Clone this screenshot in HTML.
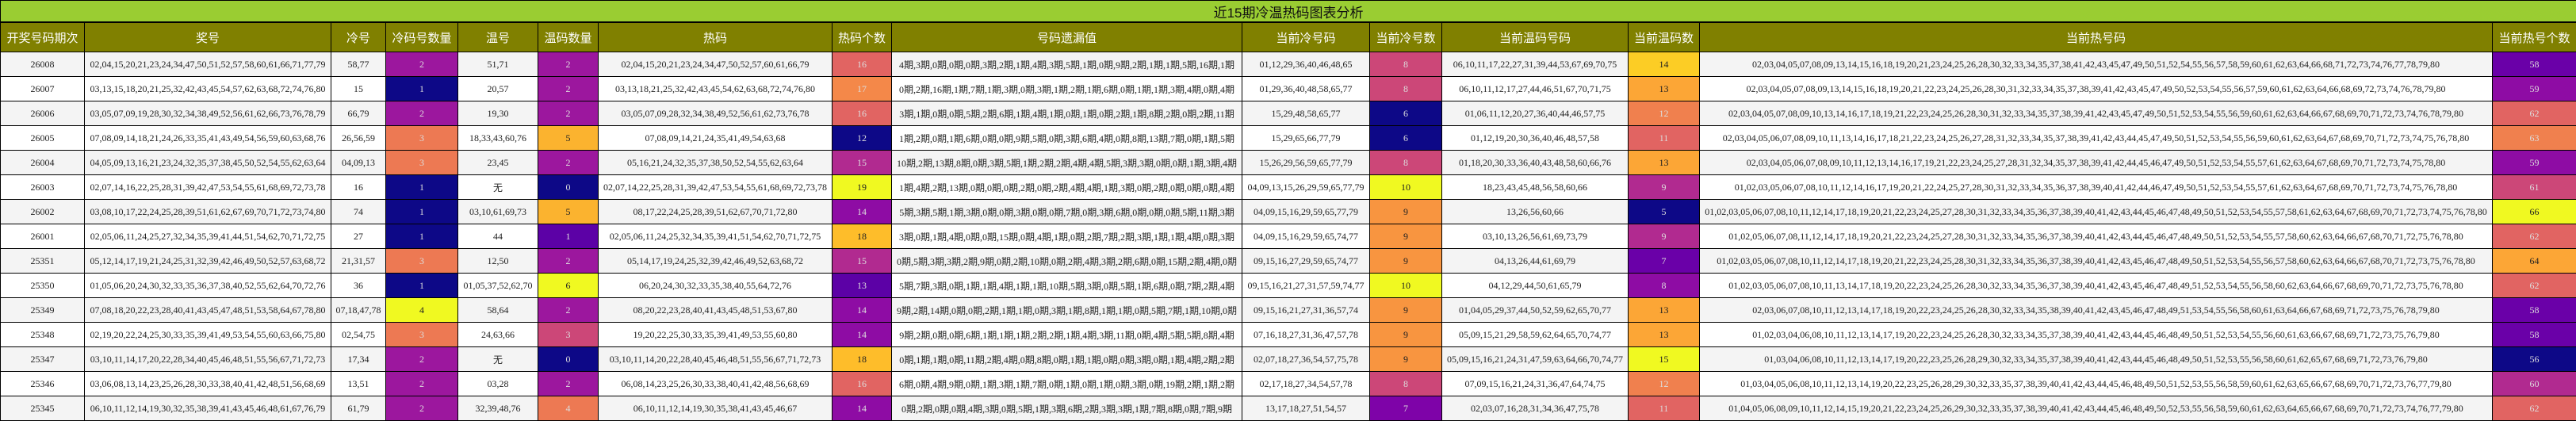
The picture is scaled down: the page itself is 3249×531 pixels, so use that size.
<!DOCTYPE html>
<html><head><meta charset="utf-8"><style>
html,body{margin:0;padding:0;background:#fff;width:3249px;height:531px;overflow:hidden}
table{border-collapse:collapse;table-layout:fixed;width:3249px;font-family:"Liberation Serif","Noto Sans CJK SC",serif;font-size:12px;color:#222}
td,th{border:1px solid #000;text-align:center;padding:0;white-space:nowrap;overflow:hidden}
.tt td{background:#9acd32;height:26px;font-family:"Liberation Sans","Noto Sans CJK SC",sans-serif;font-size:17px;color:#111;border-bottom:2px solid #000}
.hd th{background:#808000;color:#fff;height:36px;font-weight:normal;font-family:"Liberation Sans","Noto Sans CJK SC",sans-serif;font-size:15px}
tr.r td{height:30px}
tr.r:nth-child(odd) td{background:#f4f4f4}
tr.r:nth-child(even) td{background:#fff}
tr.r td.a{background:#0d0887;color:#ddd}
tr.r td.b{background:#5c01a6;color:#ddd}
tr.r td.c{background:#6a00a8;color:#ddd}
tr.r td.c2{background:#7e03a8;color:#ddd}
tr.r td.d{background:#9c179e;color:#ddd}
tr.r td.e{background:#8e0ca4;color:#ddd}
tr.r td.f{background:#b12a90;color:#ddd}
tr.r td.g{background:#cc4778;color:#ddd}
tr.r td.h{background:#e16462;color:#ddd}
tr.r td.i{background:#ed7953;color:#ddd}
tr.r td.j{background:#f48849;color:#ddd}
tr.r td.j2{background:#f0804e;color:#ddd}
tr.r td.k{background:#f89540;color:#222}
tr.r td.l{background:#fca636;color:#222}
tr.r td.m{background:#fbb32f;color:#222}
tr.r td.n{background:#febd2a;color:#222}
tr.r td.o{background:#fccd25;color:#222}
tr.r td.y{background:#f0f921;color:#222}
</style></head><body>
<table>
<colgroup><col style="width:106px"><col style="width:311px"><col style="width:69px"><col style="width:91px"><col style="width:101px"><col style="width:76px"><col style="width:295px"><col style="width:75px"><col style="width:442px"><col style="width:161px"><col style="width:91px"><col style="width:235px"><col style="width:90px"><col style="width:1000px"><col style="width:106px"></colgroup>
<tr class="tt"><td colspan="15">近15期冷温热码图表分析</td></tr>
<tr class="hd"><th>开奖号码期次</th><th>奖号</th><th>冷号</th><th>冷码号数量</th><th>温号</th><th>温码数量</th><th>热码</th><th>热码个数</th><th>号码遗漏值</th><th>当前冷号码</th><th>当前冷号数</th><th>当前温码号码</th><th>当前温码数</th><th>当前热号码</th><th>当前热号个数</th></tr>
<tr class="r"><td>26008</td><td>02,04,15,20,21,23,24,34,47,50,51,52,57,58,60,61,66,71,77,79</td><td>58,77</td><td class="d">2</td><td>51,71</td><td class="d">2</td><td>02,04,15,20,21,23,24,34,47,50,52,57,60,61,66,79</td><td class="h">16</td><td>4期,3期,0期,0期,0期,3期,2期,1期,4期,3期,5期,1期,0期,9期,2期,1期,1期,5期,16期,1期</td><td>01,12,29,36,40,46,48,65</td><td class="g">8</td><td>06,10,11,17,22,27,31,39,44,53,67,69,70,75</td><td class="o">14</td><td>02,03,04,05,07,08,09,13,14,15,16,18,19,20,21,23,24,25,26,28,30,32,33,34,35,37,38,41,42,43,45,47,49,50,51,52,54,55,56,57,58,59,60,61,62,63,64,66,68,71,72,73,74,76,77,78,79,80</td><td class="c">58</td></tr>
<tr class="r"><td>26007</td><td>03,13,15,18,20,21,25,32,42,43,45,54,57,62,63,68,72,74,76,80</td><td>15</td><td class="a">1</td><td>20,57</td><td class="d">2</td><td>03,13,18,21,25,32,42,43,45,54,62,63,68,72,74,76,80</td><td class="j">17</td><td>0期,2期,16期,1期,7期,1期,3期,0期,3期,1期,2期,1期,6期,0期,1期,1期,3期,4期,0期,4期</td><td>01,29,36,40,48,58,65,77</td><td class="g">8</td><td>06,10,11,12,17,27,44,46,51,67,70,71,75</td><td class="l">13</td><td>02,03,04,05,07,08,09,13,14,15,16,18,19,20,21,22,23,24,25,26,28,30,31,32,33,34,35,37,38,39,41,42,43,45,47,49,50,52,53,54,55,56,57,59,60,61,62,63,64,66,68,69,72,73,74,76,78,79,80</td><td class="e">59</td></tr>
<tr class="r"><td>26006</td><td>03,05,07,09,19,28,30,32,34,38,49,52,56,61,62,66,73,76,78,79</td><td>66,79</td><td class="d">2</td><td>19,30</td><td class="d">2</td><td>03,05,07,09,28,32,34,38,49,52,56,61,62,73,76,78</td><td class="h">16</td><td>3期,1期,0期,0期,5期,2期,6期,1期,4期,1期,0期,1期,0期,2期,1期,8期,2期,0期,2期,11期</td><td>15,29,48,58,65,77</td><td class="a">6</td><td>01,06,11,12,20,27,36,40,44,46,57,75</td><td class="j2">12</td><td>02,03,04,05,07,08,09,10,13,14,16,17,18,19,21,22,23,24,25,26,28,30,31,32,33,34,35,37,38,39,41,42,43,45,47,49,50,51,52,53,54,55,56,59,60,61,62,63,64,66,67,68,69,70,71,72,73,74,76,78,79,80</td><td class="h">62</td></tr>
<tr class="r"><td>26005</td><td>07,08,09,14,18,21,24,26,33,35,41,43,49,54,56,59,60,63,68,76</td><td>26,56,59</td><td class="i">3</td><td>18,33,43,60,76</td><td class="m">5</td><td>07,08,09,14,21,24,35,41,49,54,63,68</td><td class="a">12</td><td>1期,2期,0期,1期,6期,0期,0期,9期,5期,0期,3期,6期,4期,0期,8期,13期,7期,0期,1期,5期</td><td>15,29,65,66,77,79</td><td class="a">6</td><td>01,12,19,20,30,36,40,46,48,57,58</td><td class="h">11</td><td>02,03,04,05,06,07,08,09,10,11,13,14,16,17,18,21,22,23,24,25,26,27,28,31,32,33,34,35,37,38,39,41,42,43,44,45,47,49,50,51,52,53,54,55,56,59,60,61,62,63,64,67,68,69,70,71,72,73,74,75,76,78,80</td><td class="j2">63</td></tr>
<tr class="r"><td>26004</td><td>04,05,09,13,16,21,23,24,32,35,37,38,45,50,52,54,55,62,63,64</td><td>04,09,13</td><td class="i">3</td><td>23,45</td><td class="d">2</td><td>05,16,21,24,32,35,37,38,50,52,54,55,62,63,64</td><td class="f">15</td><td>10期,2期,13期,8期,0期,3期,5期,1期,2期,2期,4期,4期,5期,3期,3期,0期,0期,1期,3期,4期</td><td>15,26,29,56,59,65,77,79</td><td class="g">8</td><td>01,18,20,30,33,36,40,43,48,58,60,66,76</td><td class="l">13</td><td>02,03,04,05,06,07,08,09,10,11,12,13,14,16,17,19,21,22,23,24,25,27,28,31,32,34,35,37,38,39,41,42,44,45,46,47,49,50,51,52,53,54,55,57,61,62,63,64,67,68,69,70,71,72,73,74,75,78,80</td><td class="e">59</td></tr>
<tr class="r"><td>26003</td><td>02,07,14,16,22,25,28,31,39,42,47,53,54,55,61,68,69,72,73,78</td><td>16</td><td class="a">1</td><td>无</td><td class="a">0</td><td>02,07,14,22,25,28,31,39,42,47,53,54,55,61,68,69,72,73,78</td><td class="y">19</td><td>1期,4期,2期,13期,0期,0期,0期,2期,0期,2期,4期,4期,1期,3期,0期,2期,0期,0期,0期,4期</td><td>04,09,13,15,26,29,59,65,77,79</td><td class="y">10</td><td>18,23,43,45,48,56,58,60,66</td><td class="f">9</td><td>01,02,03,05,06,07,08,10,11,12,14,16,17,19,20,21,22,24,25,27,28,30,31,32,33,34,35,36,37,38,39,40,41,42,44,46,47,49,50,51,52,53,54,55,57,61,62,63,64,67,68,69,70,71,72,73,74,75,76,78,80</td><td class="g">61</td></tr>
<tr class="r"><td>26002</td><td>03,08,10,17,22,24,25,28,39,51,61,62,67,69,70,71,72,73,74,80</td><td>74</td><td class="a">1</td><td>03,10,61,69,73</td><td class="m">5</td><td>08,17,22,24,25,28,39,51,62,67,70,71,72,80</td><td class="e">14</td><td>5期,3期,5期,1期,3期,0期,0期,3期,0期,0期,7期,0期,3期,6期,0期,0期,0期,5期,11期,3期</td><td>04,09,15,16,29,59,65,77,79</td><td class="k">9</td><td>13,26,56,60,66</td><td class="a">5</td><td>01,02,03,05,06,07,08,10,11,12,14,17,18,19,20,21,22,23,24,25,27,28,30,31,32,33,34,35,36,37,38,39,40,41,42,43,44,45,46,47,48,49,50,51,52,53,54,55,57,58,61,62,63,64,67,68,69,70,71,72,73,74,75,76,78,80</td><td class="y">66</td></tr>
<tr class="r"><td>26001</td><td>02,05,06,11,24,25,27,32,34,35,39,41,44,51,54,62,70,71,72,75</td><td>27</td><td class="a">1</td><td>44</td><td class="b">1</td><td>02,05,06,11,24,25,32,34,35,39,41,51,54,62,70,71,72,75</td><td class="n">18</td><td>3期,0期,1期,4期,0期,0期,15期,0期,4期,1期,0期,2期,7期,2期,3期,1期,1期,4期,0期,3期</td><td>04,09,15,16,29,59,65,74,77</td><td class="k">9</td><td>03,10,13,26,56,61,69,73,79</td><td class="f">9</td><td>01,02,05,06,07,08,11,12,14,17,18,19,20,21,22,23,24,25,27,28,30,31,32,33,34,35,36,37,38,39,40,41,42,43,44,45,46,47,48,49,50,51,52,53,54,55,57,58,60,62,63,64,66,67,68,70,71,72,75,76,78,80</td><td class="h">62</td></tr>
<tr class="r"><td>25351</td><td>05,12,14,17,19,21,24,25,31,32,39,42,46,49,50,52,57,63,68,72</td><td>21,31,57</td><td class="i">3</td><td>12,50</td><td class="d">2</td><td>05,14,17,19,24,25,32,39,42,46,49,52,63,68,72</td><td class="f">15</td><td>0期,5期,3期,3期,2期,9期,0期,2期,10期,0期,2期,4期,3期,2期,6期,0期,15期,2期,4期,0期</td><td>09,15,16,27,29,59,65,74,77</td><td class="k">9</td><td>04,13,26,44,61,69,79</td><td class="c">7</td><td>01,02,03,05,06,07,08,10,11,12,14,17,18,19,20,21,22,23,24,25,28,30,31,32,33,34,35,36,37,38,39,40,41,42,43,45,46,47,48,49,50,51,52,53,54,55,56,57,58,60,62,63,64,66,67,68,70,71,72,73,75,76,78,80</td><td class="l">64</td></tr>
<tr class="r"><td>25350</td><td>01,05,06,20,24,30,32,33,35,36,37,38,40,52,55,62,64,70,72,76</td><td>36</td><td class="a">1</td><td>01,05,37,52,62,70</td><td class="y">6</td><td>06,20,24,30,32,33,35,38,40,55,64,72,76</td><td class="b">13</td><td>5期,7期,3期,0期,1期,1期,4期,1期,1期,10期,5期,3期,0期,5期,1期,6期,0期,7期,2期,4期</td><td>09,15,16,21,27,31,57,59,74,77</td><td class="y">10</td><td>04,12,29,44,50,61,65,79</td><td class="e">8</td><td>01,02,03,05,06,07,08,10,11,13,14,17,18,19,20,22,23,24,25,26,28,30,32,33,34,35,36,37,38,39,40,41,42,43,45,46,47,48,49,51,52,53,54,55,56,58,60,62,63,64,66,67,68,69,70,71,72,73,75,76,78,80</td><td class="h">62</td></tr>
<tr class="r"><td>25349</td><td>07,08,18,20,22,23,28,40,41,43,45,47,48,51,53,58,64,67,78,80</td><td>07,18,47,78</td><td class="y">4</td><td>58,64</td><td class="d">2</td><td>08,20,22,23,28,40,41,43,45,48,51,53,67,80</td><td class="e">14</td><td>9期,2期,14期,0期,0期,2期,1期,1期,0期,3期,1期,8期,1期,1期,0期,5期,7期,1期,10期,0期</td><td>09,15,16,21,27,31,36,57,74</td><td class="k">9</td><td>01,04,05,29,37,44,50,52,59,62,65,70,77</td><td class="l">13</td><td>02,03,06,07,08,10,11,12,13,14,17,18,19,20,22,23,24,25,26,28,30,32,33,34,35,38,39,40,41,42,43,45,46,47,48,49,51,53,54,55,56,58,60,61,63,64,66,67,68,69,71,72,73,75,76,78,79,80</td><td class="c">58</td></tr>
<tr class="r"><td>25348</td><td>02,19,20,22,24,25,30,33,35,39,41,49,53,54,55,60,63,66,75,80</td><td>02,54,75</td><td class="i">3</td><td>24,63,66</td><td class="g">3</td><td>19,20,22,25,30,33,35,39,41,49,53,55,60,80</td><td class="e">14</td><td>9期,2期,0期,0期,6期,1期,1期,1期,2期,2期,1期,4期,3期,11期,0期,4期,5期,5期,8期,4期</td><td>07,16,18,27,31,36,47,57,78</td><td class="k">9</td><td>05,09,15,21,29,58,59,62,64,65,70,74,77</td><td class="l">13</td><td>01,02,03,04,06,08,10,11,12,13,14,17,19,20,22,23,24,25,26,28,30,32,33,34,35,37,38,39,40,41,42,43,44,45,46,48,49,50,51,52,53,54,55,56,60,61,63,66,67,68,69,71,72,73,75,76,79,80</td><td class="c">58</td></tr>
<tr class="r"><td>25347</td><td>03,10,11,14,17,20,22,28,34,40,45,46,48,51,55,56,67,71,72,73</td><td>17,34</td><td class="d">2</td><td>无</td><td class="a">0</td><td>03,10,11,14,20,22,28,40,45,46,48,51,55,56,67,71,72,73</td><td class="n">18</td><td>0期,1期,1期,0期,11期,2期,4期,0期,8期,0期,1期,1期,0期,0期,3期,0期,1期,4期,2期,2期</td><td>02,07,18,27,36,54,57,75,78</td><td class="k">9</td><td>05,09,15,16,21,24,31,47,59,63,64,66,70,74,77</td><td class="y">15</td><td>01,03,04,06,08,10,11,12,13,14,17,19,20,22,23,25,26,28,29,30,32,33,34,35,37,38,39,40,41,42,43,44,45,46,48,49,50,51,52,53,55,56,58,60,61,62,65,67,68,69,71,72,73,76,79,80</td><td class="a">56</td></tr>
<tr class="r"><td>25346</td><td>03,06,08,13,14,23,25,26,28,30,33,38,40,41,42,48,51,56,68,69</td><td>13,51</td><td class="d">2</td><td>03,28</td><td class="d">2</td><td>06,08,14,23,25,26,30,33,38,40,41,42,48,56,68,69</td><td class="h">16</td><td>6期,0期,4期,9期,0期,1期,3期,1期,7期,0期,1期,0期,1期,0期,3期,0期,19期,2期,1期,2期</td><td>02,17,18,27,34,54,57,78</td><td class="g">8</td><td>07,09,15,16,21,24,31,36,47,64,74,75</td><td class="j2">12</td><td>01,03,04,05,06,08,10,11,12,13,14,19,20,22,23,25,26,28,29,30,32,33,35,37,38,39,40,41,42,43,44,45,46,48,49,50,51,52,53,55,56,58,59,60,61,62,63,65,66,67,68,69,70,71,72,73,76,77,79,80</td><td class="f">60</td></tr>
<tr class="r"><td>25345</td><td>06,10,11,12,14,19,30,32,35,38,39,41,43,45,46,48,61,67,76,79</td><td>61,79</td><td class="d">2</td><td>32,39,48,76</td><td class="i">4</td><td>06,10,11,12,14,19,30,35,38,41,43,45,46,67</td><td class="e">14</td><td>0期,2期,0期,0期,4期,3期,0期,5期,1期,3期,6期,2期,3期,3期,1期,7期,8期,0期,7期,9期</td><td>13,17,18,27,51,54,57</td><td class="c2">7</td><td>02,03,07,16,28,31,34,36,47,75,78</td><td class="h">11</td><td>01,04,05,06,08,09,10,11,12,14,15,19,20,21,22,23,24,25,26,29,30,32,33,35,37,38,39,40,41,42,43,44,45,46,48,49,50,52,53,55,56,58,59,60,61,62,63,64,65,66,67,68,69,70,71,72,73,74,76,77,79,80</td><td class="h">62</td></tr>
</table>
</body></html>
